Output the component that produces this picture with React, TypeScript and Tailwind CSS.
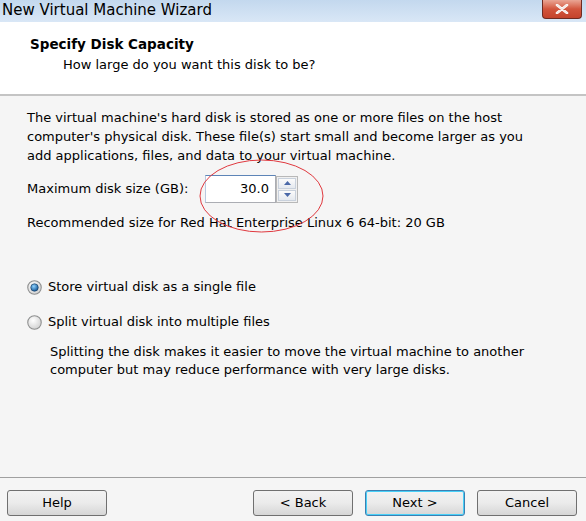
import React from "react";

const font = { fontFamily: "Tahoma, 'DejaVu Sans', 'Liberation Sans', sans-serif" };

function Btn({ label, focused, className }: { label: string; focused?: boolean; className: string }) {
  return (
    <div
      className={`h-[26px] rounded-[3px] border flex items-center justify-center text-[13px] text-black bg-gradient-to-b from-[#f2f2f2] via-[#ebebeb] to-[#d6d6d6] ${
        focused ? "border-[#3c7fb1] shadow-[inset_0_0_0_1px_#48d0f8]" : "border-[#707070]"
      } ${className}`}
    >
      {label}
    </div>
  );
}

function Radio({ checked }: { checked?: boolean }) {
  return (
    <svg width="15" height="15" viewBox="0 0 14 14">
      <defs>
        <radialGradient id="rg1" cx="40%" cy="35%" r="70%">
          <stop offset="0" stopColor="#ffffff" />
          <stop offset="1" stopColor="#cfcfcf" />
        </radialGradient>
        <radialGradient id="rg2" cx="40%" cy="35%" r="70%">
          <stop offset="0" stopColor="#8fd3ff" />
          <stop offset="1" stopColor="#0b4d8f" />
        </radialGradient>
      </defs>
      <circle cx="7" cy="7" r="6.3" fill="url(#rg1)" stroke="#8e8f8f" strokeWidth="1" />
      {checked && <circle cx="7" cy="7" r="3.5" fill="url(#rg2)" stroke="#173e63" strokeWidth="0.6" />}
    </svg>
  );
}

export default function App() {
  return (
    <div className="w-[586px] h-[521px] bg-[#f5f5f5] flex flex-col overflow-hidden relative" style={font}>
      {/* title bar */}
      <div className="h-[22px] bg-gradient-to-b from-[#c3d8ee] to-[#d9e7f6] flex items-start justify-between">
        <div className="pl-[2px] pt-[1px] text-[15px] leading-[18px] text-black">New Virtual Machine Wizard</div>
        <div className="mr-[4px] w-[40px] h-[19px] rounded-b-[4px] border border-t-0 border-[#6e2b22] bg-gradient-to-b from-[#e9a594] via-[#d2553d] to-[#c4432c] flex items-center justify-center">
          <svg width="14" height="10" viewBox="0 0 14 10">
            <path d="M2 1 L12 9 M12 1 L2 9" stroke="#ffffff" strokeWidth="2.6" strokeLinecap="round" />
            <path d="M2 1 L12 9 M12 1 L2 9" stroke="#f3e6e2" strokeWidth="1.4" strokeLinecap="round" />
          </svg>
        </div>
      </div>
      {/* header */}
      <div className="h-[74px] bg-white border-b-2 border-[#c4c4c4] pl-[30px] pt-[13px]">
        <div className="text-[13.5px] font-bold leading-[18px] text-black">Specify Disk Capacity</div>
        <div className="pl-[33px] pt-[4px] text-[13px] leading-[16px] text-black">How large do you want this disk to be?</div>
      </div>
      {/* body */}
      <div className="flex-1 pl-[27px] pt-[12px] text-[13px] text-black">
        <div className="leading-[19px] w-[515px]">
          The virtual machine's hard disk is stored as one or more files on the host computer's physical disk. These file(s) start small and become larger as you add applications, files, and data to your virtual machine.
        </div>
        <div className="flex items-center mt-[10px] h-[28px]">
          <div className="w-[178px]">Maximum disk size (GB):</div>
          <div className="w-[71px] h-[28px] border border-[#abadb3] border-t-[#5d84b7] border-l-[#b8c9e0] bg-white flex items-center justify-end pr-[6px]">
            30.0
          </div>
          <div className="w-[22px] h-[27px] border border-[#b8b8b8] bg-[#f0f0f0] flex flex-col">
            <div className="flex-1 m-[1px] mb-0 border border-[#c9d1dc] bg-gradient-to-b from-[#fbfbfb] to-[#e5e9ef] flex items-center justify-center">
              <svg width="7" height="4" viewBox="0 0 7 4"><path d="M0 4 L3.5 0 L7 4 Z" fill="#4a68a8" /></svg>
            </div>
            <div className="flex-1 m-[1px] border border-[#c9d1dc] bg-gradient-to-b from-[#fbfbfb] to-[#e5e9ef] flex items-center justify-center">
              <svg width="7" height="4" viewBox="0 0 7 4"><path d="M0 0 L3.5 4 L7 0 Z" fill="#4a68a8" /></svg>
            </div>
          </div>
        </div>
        <div className="mt-[11px] leading-[18px]">Recommended size for Red Hat Enterprise Linux 6 64-bit: 20 GB</div>

        <div className="mt-[46px] flex items-center gap-[6px] leading-[18px]">
          <Radio checked />
          <span>Store virtual disk as a single file</span>
        </div>
        <div className="mt-[17px] flex items-center gap-[6px] leading-[18px]">
          <Radio />
          <span>Split virtual disk into multiple files</span>
        </div>
        <div className="mt-[12px] ml-[23px] leading-[18px] w-[500px]">
          Splitting the disk makes it easier to move the virtual machine to another computer but may reduce performance with very large disks.
        </div>
      </div>
      {/* footer */}
      <div className="h-[44px] border-t border-[#a0a0a0] flex items-start pt-[12px]">
        <Btn label="Help" className="ml-[7px] w-[100px]" />
        <Btn label="< Back" className="ml-[146px] w-[100px]" />
        <Btn label="Next >" focused className="ml-[12px] w-[100px]" />
        <Btn label="Cancel" className="ml-[12px] w-[100px]" />
      </div>
      {/* red annotation ellipse */}
      <svg className="absolute left-0 top-0 pointer-events-none" width="586" height="521">
        <ellipse cx="261.5" cy="196" rx="61.5" ry="36" fill="none" stroke="#e0393f" strokeWidth="1" />
      </svg>
    </div>
  );
}
